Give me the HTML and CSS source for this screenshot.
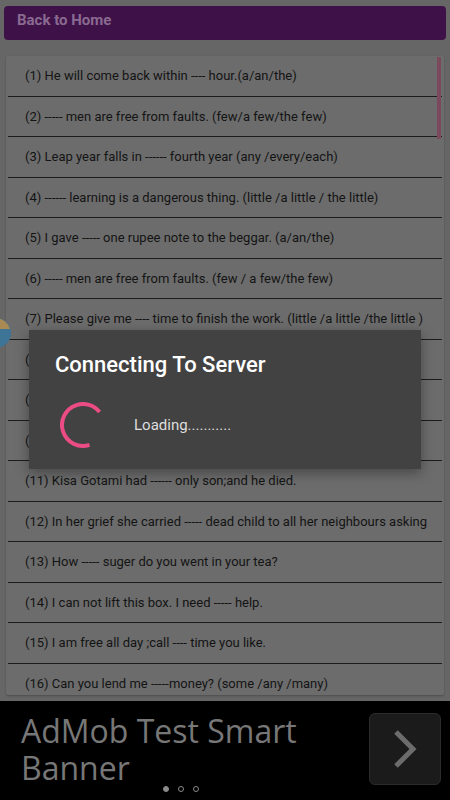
FILE: index.html
```html
<!DOCTYPE html>
<html lang="en">
<head>
  <meta charset="UTF-8">
  <title>Articles Quiz</title>
  <link rel="stylesheet" href="styles.css">
</head>
<body>

<div class="top">
  <a href="#" class="home-btn">Back to Home</a>
</div>

<div class="card">
  <ul class="list">
    <li>(1) He will come back within ---- hour.(a/an/the)</li>
    <li>(2) ----- men are free from faults. (few/a few/the few)</li>
    <li>(3) Leap year falls in ------ fourth year (any /every/each)</li>
    <li>(4) ------ learning is a dangerous thing. (little /a little / the little)</li>
    <li>(5) I gave ----- one rupee note to the beggar. (a/an/the)</li>
    <li>(6) ----- men are free from faults. (few / a few/the few)</li>
    <li>(7) Please give me ---- time to finish the work. (little /a little /the little )</li>
    <li>(8) I have ----- friends in this town. (few/a few/the few)</li>
    <li>(9) He is ----- honest man. (a/an/the)</li>
    <li>(10) ----- Ganges is a holy river. (a/an/the)</li>
    <li>(11) Kisa Gotami had ------ only son;and he died.</li>
    <li>(12) In her grief she carried ----- dead child to all her neighbours asking</li>
    <li>(13) How ----- suger do you went in your tea?</li>
    <li>(14) I can not lift this box. I need ----- help.</li>
    <li>(15) I am free all day ;call ---- time you like.</li>
    <li>(16) Can you lend me -----money? (some /any /many)</li>
  </ul>
  <div class="scrollbar"></div>
</div>

<div class="ad">
  <div class="ad-text">AdMob Test Smart Banner</div>
  <a href="#" class="ad-arrow">
    <svg width="24" height="40" viewBox="0 0 24 40">
      <path d="M3 3 L20 20 L3 37" fill="none" stroke="#6c6c6c" stroke-width="5"/>
    </svg>
  </a>
  <ol class="dots">
    <li class="current"></li>
    <li></li>
    <li></li>
  </ol>
</div>

<!-- floating icon peeking from the left edge -->
<svg class="peek" width="12" height="32" viewBox="0 0 12 32">
  <circle cx="-4" cy="16" r="15" fill="#3e7496"/>
  <path d="M-4 1 A15 15 0 0 1 10 12 L-4 12 Z" fill="#a98a52"/>
</svg>

<div class="dialog">
  <h2>Connecting To Server</h2>
  <div class="dialog-body">
    <svg class="spinner" width="48" height="48" viewBox="0 0 48 48">
      <circle cx="24" cy="24" r="21" fill="none" stroke="#ec4c84" stroke-width="4"
              stroke-dasharray="91 200" transform="rotate(72 24 24)"/>
    </svg>
    <span class="loading">Loading...........</span>
  </div>
</div>

</body>
</html>
```

FILE: styles.css
```css
* {
  margin: 0;
  padding: 0;
  list-style: none;
  box-sizing: border-box;
}

body {
  width: 450px;
  height: 800px;
  overflow: hidden;
  background-color: #666;
  font-family: Roboto, "Liberation Sans", sans-serif;
  display: flex;
  flex-direction: column;
}

/*按钮*/
.top {
  padding: 6px 4px 0;
}

.home-btn {
  display: flex;
  align-items: center;
  height: 34px;
  padding-left: 13px;
  padding-bottom: 6px;
  border-radius: 4px;
  background-color: #3e1248;
  color: #8a6a91;
  font-size: 15px;
  font-weight: 700;
  text-decoration: none;
}

/*列表*/
.card {
  position: relative;
  margin: 16px 6px 0;
  height: 639px;
  background-color: #6c6c6c;
  border-radius: 2px;
  box-shadow: 0 1px 2px rgba(0, 0, 0, 0.25);
  overflow: hidden;
}

.list {
  padding: 0 2px;
}

.list li {
  height: 40.5px;
  display: flex;
  align-items: center;
  padding-left: 17px;
  border-bottom: 1px solid #1c1c1c;
  color: #141414;
  font-size: 13px;
  white-space: nowrap;
  overflow: hidden;
}

.scrollbar {
  position: absolute;
  top: 1px;
  right: 3px;
  width: 4px;
  height: 82px;
  background-color: #7a4a5c;
}

/*广告*/
.ad {
  position: relative;
  margin-top: auto;
  height: 99px;
  background-color: #000;
  display: flex;
  align-items: center;
  justify-content: space-between;
  padding: 0 9px 0 21px;
}

.ad-text {
  width: 290px;
  color: #777;
  font-family: "Open Sans", "DejaVu Sans", sans-serif;
  font-size: 32px;
  line-height: 37px;
  margin-top: -3px;
}

.ad-arrow {
  width: 72px;
  height: 72px;
  margin-top: -3px;
  border-radius: 6px;
  background-color: #1b1b1b;
  border: 1px solid #2c2c2c;
  display: flex;
  align-items: center;
  justify-content: center;
}

.dots {
  position: absolute;
  left: 163px;
  bottom: 8px;
  display: flex;
  gap: 9px;
}

.dots li {
  width: 6px;
  height: 6px;
  border-radius: 3px;
  border: 1px solid #8a8a8a;
}

.dots li.current {
  background-color: #8a8a8a;
}

.peek {
  position: absolute;
  left: 0;
  top: 317px;
}

/*对话框*/
.dialog {
  position: absolute;
  left: 29px;
  top: 330px;
  width: 392px;
  height: 139px;
  background-color: #424242;
  box-shadow: 0 4px 12px rgba(0, 0, 0, 0.35);
  padding: 22px 0 0 26px;
}

.dialog h2 {
  color: #fff;
  font-size: 22px;
  font-weight: 500;
  line-height: 26px;
}

.dialog-body {
  display: flex;
  align-items: center;
  margin-top: 23px;
}

.spinner {
  margin-left: 4px;
}

.loading {
  margin-left: 27px;
  color: #ddd;
  font-size: 15px;
}
```
